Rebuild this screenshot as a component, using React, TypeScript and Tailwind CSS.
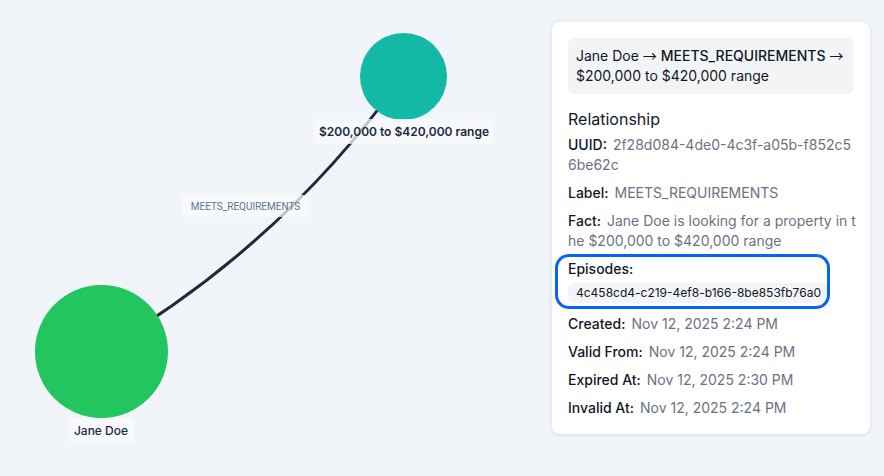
import React from 'react';

const rows: { label: string; value: string }[] = [
  { label: 'Created:', value: 'Nov 12, 2025 2:24 PM' },
  { label: 'Valid From:', value: 'Nov 12, 2025 2:24 PM' },
  { label: 'Expired At:', value: 'Nov 12, 2025 2:30 PM' },
  { label: 'Invalid At:', value: 'Nov 12, 2025 2:24 PM' },
];

const Field: React.FC<{ label: string; value: string; className?: string }> = ({ label, value, className = '' }) => (
  <div className={`text-sm leading-5 break-all ${className}`}>
    <span className="font-medium text-gray-900 mr-1.5">{label}</span>
    <span className="text-gray-500">{value}</span>
  </div>
);

const Arrow = () => <span className="font-['Noto_Sans_CJK_SC',sans-serif] leading-none">→</span>;

const Graph: React.FC = () => (
  <div className="absolute inset-0">
    <svg width="884" height="476" className="absolute inset-0">
      <path d="M101 351 Q282 246 403 76" fill="none" stroke="#1e293b" strokeWidth="3" strokeLinecap="round" />
      <circle cx="101.5" cy="351.5" r="66.5" fill="#22c55e" />
      <circle cx="403.5" cy="76.5" r="43.5" fill="#14b8a6" />
    </svg>

    {/* edge label */}
    <div className="absolute left-[182px] top-[195px] w-[127px] h-[22px] flex items-center justify-center bg-slate-50/75 text-[10px] text-slate-500 font-['Roboto',sans-serif]">
      MEETS_REQUIREMENTS
    </div>

    {/* node labels */}
    <div className="absolute left-[315px] top-[119px] w-[178px] h-[25px] flex items-center justify-center bg-slate-50/75 text-xs font-semibold text-slate-800">
      $200,000 to $420,000 range
    </div>
    <div className="absolute left-[68px] top-[418px] w-[66px] h-[25px] flex items-center justify-center bg-slate-50/75 text-xs font-medium text-slate-800">
      Jane Doe
    </div>
  </div>
);

const App: React.FC = () => {
  return (
    <div className="relative w-[884px] h-[476px] overflow-hidden bg-[#f1f5f9] font-['Inter',sans-serif]">
      <Graph />

      <div className="relative flex justify-end pt-[22px] pr-[14px]">
        <div className="w-[318px] bg-white rounded-lg shadow-[0_1px_4px_rgba(15,23,42,0.12)] p-4">
          <div className="bg-gray-100 rounded-md p-2 text-sm leading-5 text-gray-900">
            Jane Doe <Arrow /> <span className="font-medium">MEETS_REQUIREMENTS</span> <Arrow /> $200,000 to $420,000 range
          </div>

          <h3 className="mt-[13px] text-base leading-6 text-gray-900">Relationship</h3>

          <div className="mt-1 flex flex-col gap-2">
            <Field label="UUID:" value="2f28d084-4de0-4c3f-a05b-f852c56be62c" />
            <Field label="Label:" value="MEETS_REQUIREMENTS" />
            <Field label="Fact:" value="Jane Doe is looking for a property in the $200,000 to $420,000 range" className="-mr-1.5" />

            <div className="relative mb-[3px]">
              <div className="text-sm leading-5 font-medium text-gray-900">Episodes:</div>
              <div className="mt-1 inline-block rounded-md bg-gray-100 px-2 py-0.5 text-xs leading-4 text-gray-900">
                4c458cd4-c219-4ef8-b166-8be853fb76a0
              </div>
              {/* highlight ring */}
              <div className="absolute left-[-13px] top-[-5px] w-[275px] h-[55px] rounded-[14px] border-[3px] border-[#0b63f5] pointer-events-none" />
            </div>

            {rows.map((r) => (
              <Field key={r.label} label={r.label} value={r.value} />
            ))}
          </div>
        </div>
      </div>
    </div>
  );
};

export default App;
